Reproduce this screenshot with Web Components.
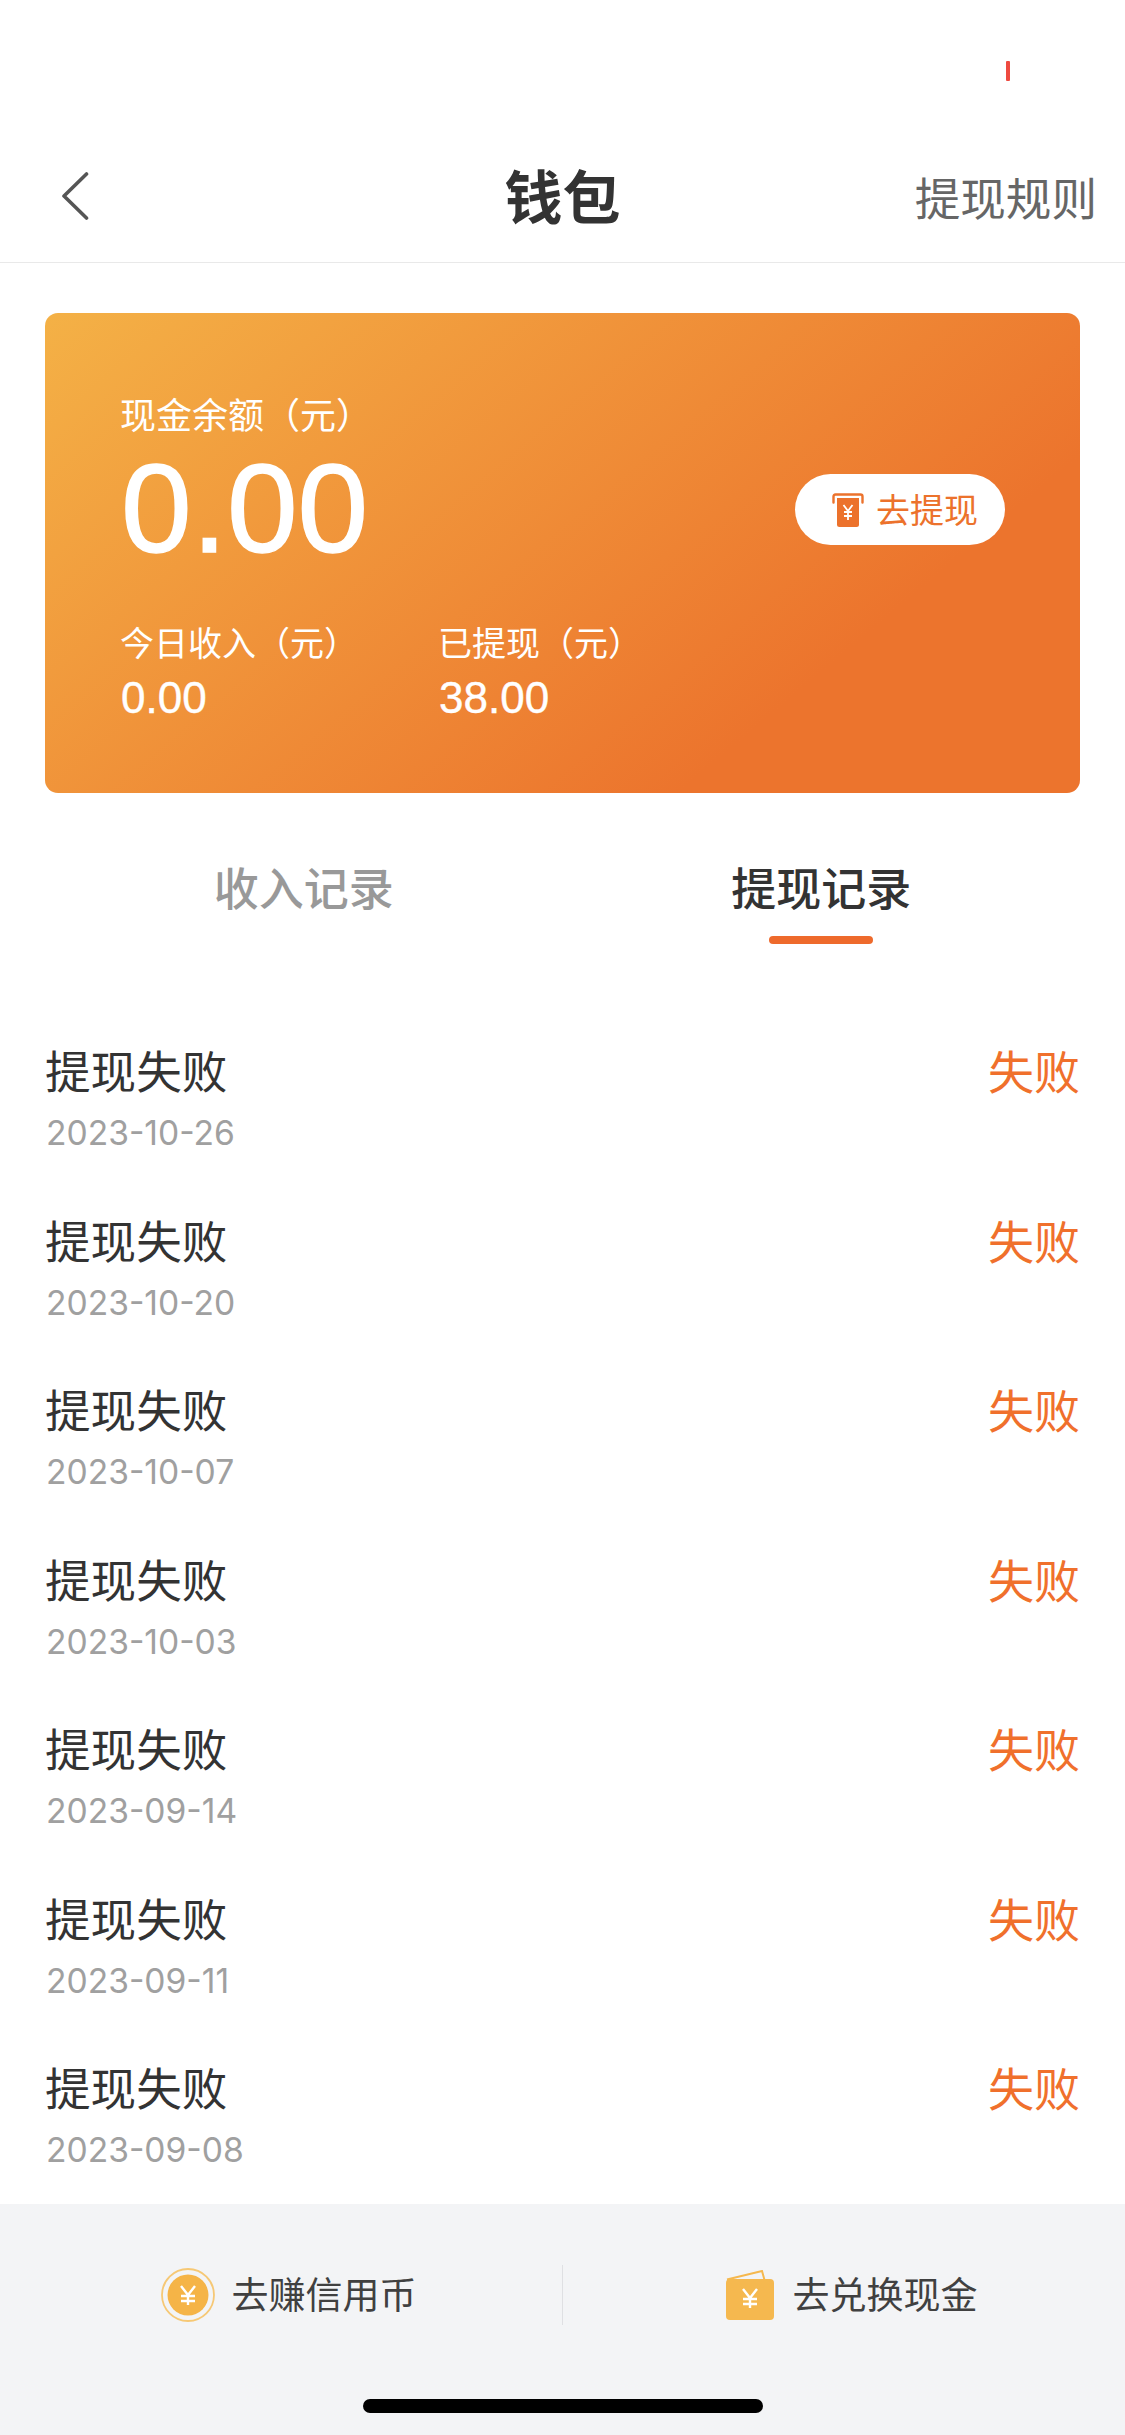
<!DOCTYPE html>
<html lang="zh">
<head>
<meta charset="utf-8">
<title>钱包</title>
<style>
  html, body { margin: 0; background: #fff; }
  body { font-family: "Noto Sans CJK SC", "Liberation Sans", sans-serif; }
</style>
</head>
<body>
<wallet-page>
  <status-strip></status-strip>
  <nav-bar title-text="钱包" action="提现规则"></nav-bar>
  <balance-card></balance-card>
  <tab-bar></tab-bar>
  <record-list>
    <record-row date="2023-10-26"></record-row>
    <record-row date="2023-10-20"></record-row>
    <record-row date="2023-10-07"></record-row>
    <record-row date="2023-10-03"></record-row>
    <record-row date="2023-09-14"></record-row>
    <record-row date="2023-09-11"></record-row>
    <record-row date="2023-09-08"></record-row>
  </record-list>
  <bottom-bar></bottom-bar>
</wallet-page>

<script>
const CJK = '"Noto Sans CJK SC", "Liberation Sans", sans-serif';
const NUM = '"Liberation Sans", "Noto Sans CJK SC", sans-serif';

class WalletPage extends HTMLElement {
  connectedCallback() {
    this.attachShadow({ mode: 'open' });
    this.shadowRoot.innerHTML = `
      <style>
        :host { display: flex; flex-direction: column; width: 1125px; height: 2435px; overflow: hidden; background: #fff; font-family: ${CJK}; }
      </style>
      <slot></slot>
    `;
  }
}

class StatusStrip extends HTMLElement {
  connectedCallback() {
    this.attachShadow({ mode: 'open' });
    this.shadowRoot.innerHTML = `
      <style>
        :host { display: flex; height: 130px; box-sizing: border-box; padding: 61px 0 0 1006px; }
        i { display: block; width: 4px; height: 20px; border-radius: 1px; background: #ee4a40; }
      </style>
      <i></i>
    `;
  }
}

class NavBar extends HTMLElement {
  connectedCallback() {
    this.attachShadow({ mode: 'open' });
    this.shadowRoot.innerHTML = `
      <style>
        :host { display: grid; grid-template-columns: 1fr auto 1fr; align-items: center; height: 133px; box-sizing: border-box; padding: 0 28px 0 30px; border-bottom: 1px solid #e9e9e9; }
        svg { display: block; margin-left: 31px; }
        h1 { margin: 0 2px 5px 0; font-size: 58px; line-height: 80px; font-weight: 700; color: #333; }
        span { justify-self: end; font-size: 45.6px; line-height: 60px; color: #666; }
      </style>
      <svg width="28" height="48" viewBox="0 0 28 48" fill="none"><path d="M25.5 2 L3 24 L25.5 46" stroke="#555" stroke-width="3.6" stroke-linecap="round" stroke-linejoin="round"/></svg>
      <h1>${this.getAttribute('title-text')}</h1>
      <span>${this.getAttribute('action')}</span>
    `;
  }
}

class BalanceCard extends HTMLElement {
  connectedCallback() {
    this.attachShadow({ mode: 'open' });
    this.shadowRoot.innerHTML = `
      <style>
        :host { display: block; box-sizing: border-box; height: 480px; margin: 50px 45px 0; padding: 75px 75px 0 75px; border-radius: 13px; color: #fff; background: linear-gradient(140deg, #f4b146 0%, #ec742d 75%); }
        .label { font-size: 36px; line-height: 50px; }
        .hero { display: flex; align-items: center; justify-content: space-between; height: 135px; margin-top: 3px; }
        .amount { font-family: ${NUM}; font-size: 127px; line-height: 135px; margin-left: 1px; -webkit-text-stroke: 1.5px #fff; }
        .stats { display: flex; margin-top: 43px; }
        .stats > div { width: 318px; }
        .small { font-size: 34px; line-height: 46px; }
        .value { font-family: ${NUM}; font-size: 44px; line-height: 50px; margin: 8px 0 0 1px; -webkit-text-stroke: .4px #fff; }
        withdraw-button { margin-top: 2px; }
      </style>
      <div class="label">现金余额（元）</div>
      <div class="hero">
        <div class="amount">0.00</div>
        <withdraw-button></withdraw-button>
      </div>
      <div class="stats">
        <div><div class="small">今日收入（元）</div><div class="value">0.00</div></div>
        <div><div class="small">已提现（元）</div><div class="value">38.00</div></div>
      </div>
    `;
  }
}

class WithdrawButton extends HTMLElement {
  connectedCallback() {
    this.attachShadow({ mode: 'open' });
    this.shadowRoot.innerHTML = `
      <style>
        :host { display: flex; align-items: center; gap: 12px; box-sizing: border-box; width: 210px; height: 71px; padding-left: 37px; border-radius: 36px; background: #fff; color: #ec722c; font-size: 34px; }
        svg { display: block; flex: none; }
        span { margin-bottom: 2px; }
      </style>
      <svg width="32" height="34" viewBox="0 0 32 34">
        <path d="M1.5 9.5 V3.5 Q1.5 1.5 3.5 1.5 H28.5 Q30.5 1.5 30.5 3.5 V9.5" fill="none" stroke="#ec722c" stroke-width="2.4" stroke-linecap="round"/>
        <path d="M5 5 H27 V31.5 Q27 34 24.5 34 H7.5 Q5 34 5 31.5 Z" fill="#ec722c"/>
        <path d="M11.5 12 L16 18 L20.5 12 M16 18 V27 M12 19 H20 M12 23 H20" fill="none" stroke="#fff" stroke-width="1.8"/>
      </svg>
      <span>去提现</span>
    `;
  }
}

class TabBar extends HTMLElement {
  connectedCallback() {
    this.attachShadow({ mode: 'open' });
    this.shadowRoot.innerHTML = `
      <style>
        :host { display: grid; grid-template-columns: 1fr 1fr; margin: 64px 45px 0; font-size: 45px; line-height: 60px; font-weight: 500; text-align: center; color: #999; }
        .on { color: #333; }
        .on i { display: block; width: 104px; height: 8px; margin: 19px auto 0; border-radius: 4px; background: #ee6a2c; }
      </style>
      <div>收入记录</div>
      <div class="on">提现记录<i></i></div>
    `;
  }
}

class RecordList extends HTMLElement {
  connectedCallback() {
    this.attachShadow({ mode: 'open' });
    this.shadowRoot.innerHTML = `
      <style>
        :host { display: flex; flex-direction: column; flex: 1; min-height: 0; gap: 55.5px; padding: 95px 45px 0; overflow: hidden; }
      </style>
      <slot></slot>
    `;
  }
}

class RecordRow extends HTMLElement {
  connectedCallback() {
    this.attachShadow({ mode: 'open' });
    this.shadowRoot.innerHTML = `
      <style>
        :host { display: grid; grid-template-columns: 1fr auto; row-gap: 11px; height: 114px; }
        .title, .state { line-height: 60px; }
        .title { font-size: 45.6px; color: #333; }
        .state { font-size: 46px; color: #f0702c; }
        .date { grid-column: 1 / 3; padding-left: 1px; font-family: Inter, ${NUM}; font-size: 33.6px; line-height: 46px; color: #a0a0a0; }
      </style>
      <div class="title">提现失败</div>
      <div class="state">失败</div>
      <div class="date">${this.getAttribute('date')}</div>
    `;
  }
}

class BottomBar extends HTMLElement {
  connectedCallback() {
    this.attachShadow({ mode: 'open' });
    const yen = (x, y) => `<path d="M${x - 7} ${y - 9} L${x} ${y} L${x + 7} ${y - 9} M${x} ${y} V${y + 10} M${x - 7} ${y + 1} H${x + 7} M${x - 7} ${y + 6} H${x + 7}" fill="none" stroke="#fff" stroke-width="2.4"/>`;
    this.shadowRoot.innerHTML = `
      <style>
        :host { display: block; height: 231px; box-sizing: border-box; padding-top: 61px; background: #f3f4f6; }
        .row { display: grid; grid-template-columns: 562px 1px 1fr; height: 60px; }
        .item { display: flex; align-items: center; justify-content: center; padding-left: 15px; font-size: 37px; color: #404040; }
        .item span { margin-bottom: 4px; }
        .rule { background: #dfe0e3; }
        svg { display: block; flex: none; }
        .home { width: 400px; height: 14px; margin: 74px auto 0; border-radius: 7px; background: #000; }
      </style>
      <div class="row">
        <div class="item" style="gap:17px">
          <svg width="54" height="54" viewBox="0 0 54 54">
            <circle cx="27" cy="27" r="26" fill="none" stroke="#f6c875" stroke-width="1.8"/>
            <circle cx="27" cy="27" r="20.5" fill="#f5b447"/>
            ${yen(27, 27)}
          </svg>
          <span>去赚信用币</span>
        </div>
        <div class="rule"></div>
        <div class="item" style="gap:19px">
          <svg width="48" height="50" viewBox="0 0 48 50">
            <path d="M1 9.5 L36 1 L38.5 10" fill="none" stroke="#f5b84f" stroke-width="2"/>
            <rect x="0" y="9" width="48" height="41" rx="4" fill="#f5b84f"/>
            ${yen(24, 28)}
          </svg>
          <span>去兑换现金</span>
        </div>
      </div>
      <div class="home"></div>
    `;
  }
}

customElements.define('wallet-page', WalletPage);
customElements.define('status-strip', StatusStrip);
customElements.define('nav-bar', NavBar);
customElements.define('balance-card', BalanceCard);
customElements.define('withdraw-button', WithdrawButton);
customElements.define('tab-bar', TabBar);
customElements.define('record-list', RecordList);
customElements.define('record-row', RecordRow);
customElements.define('bottom-bar', BottomBar);
</script>
</body>
</html>
